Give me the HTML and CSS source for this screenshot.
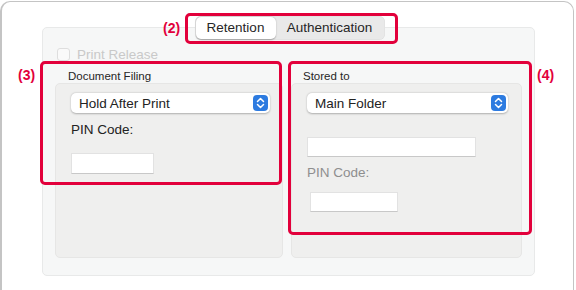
FILE: index.html
```html
<!DOCTYPE html>
<html lang="en">
<head>
  <meta charset="UTF-8">
  <title>Retention</title>
  <link rel="stylesheet" href="styles.css">
</head>
<body>

<div class="window">
  <div class="tabs">
    <div class="segmented">
      <span class="seg active">Retention</span>
      <span class="seg">Authentication</span>
    </div>
  </div>

  <div class="panel">
    <label class="check disabled">
      <span class="box"></span>
      Print Release
    </label>

    <div class="columns">
      <div class="column">
        <div class="col-title">Document Filing</div>
        <div class="group">
          <div class="popup">
            <span>Hold After Print</span>
            <span class="stepper">
              <svg width="9" height="12" viewBox="0 0 9 12"><path d="M1.5 4.5 L4.5 1.5 L7.5 4.5 M1.5 7.5 L4.5 10.5 L7.5 7.5" fill="none" stroke="#fff" stroke-width="1.5" stroke-linecap="round" stroke-linejoin="round"/></svg>
            </span>
          </div>
          <div class="field-label">PIN Code:</div>
          <div class="input pin-left"></div>
        </div>
      </div>

      <div class="column right">
        <div class="col-title">Stored to</div>
        <div class="group">
          <div class="popup">
            <span>Main Folder</span>
            <span class="stepper">
              <svg width="9" height="12" viewBox="0 0 9 12"><path d="M1.5 4.5 L4.5 1.5 L7.5 4.5 M1.5 7.5 L4.5 10.5 L7.5 7.5" fill="none" stroke="#fff" stroke-width="1.5" stroke-linecap="round" stroke-linejoin="round"/></svg>
            </span>
          </div>
          <div class="input folder-name"></div>
          <div class="field-label muted">PIN Code:</div>
          <div class="input pin-right"></div>
        </div>
      </div>
    </div>
  </div>
</div>

<!-- annotations -->
<div class="mark mark-2"></div>
<div class="mark mark-3"></div>
<div class="mark mark-4"></div>
<span class="mark-label label-2">(2)</span>
<span class="mark-label label-3">(3)</span>
<span class="mark-label label-4">(4)</span>

</body>
</html>
```

FILE: styles.css
```css
* {
  margin: 0;
  padding: 0;
  box-sizing: border-box;
}

body {
  font-family: "Liberation Sans", Arial, sans-serif;
  background: #fff;
  color: #222;
  width: 576px;
  height: 290px;
  overflow: hidden;
  position: relative;
}

.window {
  margin: 1px 2px 0 0;
  height: 300px;
  background: #fff;
  border-top: 1.5px solid #c4c4c4;
  border-left: 2px solid #c4c4c4;
  border-right: 1.5px solid #c4c4c4;
  border-radius: 10px 10px 0 0;
  padding: 14px 0 0 40px;
}

/* tabs */
.tabs {
  display: flex;
  justify-content: center;
  width: 493px;
  position: relative;
  z-index: 1;
}

.segmented {
  display: flex;
  background: #e9e9e9;
  border-radius: 6px;
  padding: 1px;
  margin-left: 2px;
  box-shadow: inset 0 0 0 0.5px #dcdcdc;
}

.seg {
  font-size: 13.5px;
  height: 22px;
  line-height: 22px;
  color: #262626;
  text-align: center;
}

.seg.active {
  background: #fff;
  border-radius: 5px;
  box-shadow: 0 0.5px 1.5px rgba(0, 0, 0, 0.3);
  width: 80px;
}

.seg:not(.active) {
  width: 108px;
}

/* panel */
.panel {
  width: 493px;
  height: 249px;
  margin-top: -13px;
  background: #f6f7f7;
  border: 1px solid #e8e9e9;
  border-radius: 5px;
  padding: 19px 12px 0 12px;
}

.check {
  display: flex;
  align-items: center;
  gap: 7px;
  font-size: 13.5px;
  margin-left: 2px;
  height: 14px;
}

.check.disabled {
  color: #c9c9c9;
}

.check .box {
  width: 13px;
  height: 13px;
  border: 1px solid #dedede;
  border-radius: 3px;
  background: #fafafa;
}

.columns {
  display: flex;
  gap: 8px;
  margin-top: 9px;
}

.column {
  width: 228px;
}

.column.right {
  width: 231px;
}

.col-title {
  font-size: 11.5px;
  color: #262626;
  height: 13px;
  line-height: 13px;
  padding-left: 13px;
}

.column.right .col-title {
  padding-left: 12px;
}

.group {
  height: 175px;
  background: #efefee;
  border: 1px solid #e6e6e5;
  border-radius: 5px;
  padding: 9px 12px 0 15px;
}

.column.right .group {
  padding-right: 13px;
}

.popup {
  display: flex;
  align-items: center;
  justify-content: space-between;
  height: 20px;
  background: #fff;
  border-radius: 5px;
  box-shadow: 0 0.5px 2px rgba(0, 0, 0, 0.28);
  padding: 0 2px 0 8px;
  font-size: 13.5px;
  color: #222;
}

.stepper {
  display: flex;
  align-items: center;
  justify-content: center;
  width: 15px;
  height: 16px;
  background: #2d7be0;
  border-radius: 4px;
}

.field-label {
  font-size: 13.5px;
  color: #222;
  margin-top: 9px;
  height: 15px;
  line-height: 15px;
}

.field-label.muted {
  color: #8e8e8e;
  margin-top: 8px;
}

.input {
  background: #fff;
  border: 1px solid #e2e2e2;
  border-bottom-color: #c8c8c8;
  height: 21px;
}

.pin-left {
  width: 83px;
  margin-top: 16px;
}

.folder-name {
  width: 169px;
  height: 20px;
  margin-top: 24px;
}

.pin-right {
  width: 88px;
  height: 20px;
  margin-top: 12px;
  margin-left: 3px;
}

/* annotations */
.mark {
  position: absolute;
  border: 3px solid #e2003b;
  border-radius: 5px;
}

.mark-2 { left: 185px; top: 13px; width: 213px; height: 31px; }
.mark-3 { left: 40px; top: 61px; width: 242px; height: 124px; }
.mark-4 { left: 288px; top: 61px; width: 244px; height: 174px; }

.mark-label {
  position: absolute;
  color: #e2003b;
  font-weight: bold;
  font-size: 14px;
  line-height: 16px;
}

.label-2 { left: 163px; top: 20px; }
.label-3 { left: 18px; top: 67px; }
.label-4 { left: 537px; top: 67px; }
```
